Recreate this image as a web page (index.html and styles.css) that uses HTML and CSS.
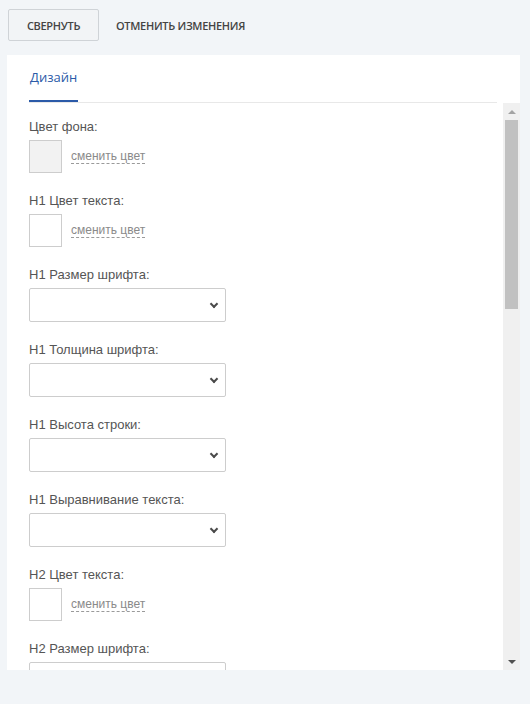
FILE: index.html
```html
<!DOCTYPE html>
<html lang="ru">
<head>
  <meta charset="UTF-8">
  <title>Дизайн</title>
  <link rel="stylesheet" href="styles.css">
</head>
<body>
  <div class="toolbar">
    <button class="btn btn-outline">Свернуть</button>
    <button class="btn btn-link">Отменить изменения</button>
  </div>

  <div class="panel">
    <div class="tabs">
      <div class="tab active">Дизайн</div>
    </div>

    <div class="panel-body">
      <div class="fields">
        <div class="field">
          <label>Цвет фона:</label>
          <div class="color-row">
            <span class="swatch swatch-gray"></span>
            <a class="change-color">сменить цвет</a>
          </div>
        </div>

        <div class="field">
          <label>H1 Цвет текста:</label>
          <div class="color-row">
            <span class="swatch"></span>
            <a class="change-color">сменить цвет</a>
          </div>
        </div>

        <div class="field">
          <label>H1 Размер шрифта:</label>
          <div class="select"><span class="chevron"></span></div>
        </div>

        <div class="field">
          <label>H1 Толщина шрифта:</label>
          <div class="select"><span class="chevron"></span></div>
        </div>

        <div class="field">
          <label>H1 Высота строки:</label>
          <div class="select"><span class="chevron"></span></div>
        </div>

        <div class="field">
          <label>H1 Выравнивание текста:</label>
          <div class="select"><span class="chevron"></span></div>
        </div>

        <div class="field">
          <label>H2 Цвет текста:</label>
          <div class="color-row">
            <span class="swatch"></span>
            <a class="change-color">сменить цвет</a>
          </div>
        </div>

        <div class="field">
          <label>H2 Размер шрифта:</label>
          <div class="select"><span class="chevron"></span></div>
        </div>
      </div>

      <!-- fake scrollbar, same look as the classic desktop one -->
      <div class="scrollbar">
        <span class="arrow arrow-up"></span>
        <div class="track">
          <div class="thumb"></div>
        </div>
        <span class="arrow arrow-down"></span>
      </div>
    </div>
  </div>
</body>
</html>
```

FILE: styles.css
```css
* {
  margin: 0;
  padding: 0;
  box-sizing: border-box;
}

body {
  width: 530px;
  height: 704px;
  background-color: #f2f5f8;
  font-family: 'Liberation Sans', Arial, sans-serif;
  color: #555;
  overflow: hidden;
}

.toolbar {
  display: flex;
  align-items: flex-start;
  padding: 9px 8px 0 8px;
  height: 55px;
}

.btn {
  font-family: 'Open Sans', sans-serif;
  font-size: 11px;
  font-weight: 600;
  letter-spacing: -0.3px;
  text-transform: uppercase;
  color: #444;
  background: none;
  border: none;
  cursor: pointer;
  height: 32px;
}

.btn-outline {
  width: 91px;
  border: 1px solid #cfd3d7;
  border-radius: 2px;
  background-color: #f2f4f6;
}

.btn-link {
  padding: 0 17px;
}

.panel {
  width: 513px;
  height: 615px;
  margin-left: 7px;
  background-color: #fff;
  display: flex;
  flex-direction: column;
}

.tabs {
  display: flex;
  margin: 0 23px 0 22px;
  border-bottom: 1px solid #e8e8e8;
  height: 48px;
}

.tab {
  font-family: 'Open Sans', sans-serif;
  font-size: 13px;
  font-weight: 500;
  color: #2b5aa8;
  padding: 13px 1px 0 1px;
  height: 47px;
}

.tab.active {
  border-bottom: 2px solid #2b5aa8;
}

.panel-body {
  flex: 1;
  display: flex;
  overflow: hidden;
}

.fields {
  flex: 1;
  padding: 16px 0 0 22px;
  overflow: hidden;
}

.field {
  margin-bottom: 20px;
}

.field label {
  display: block;
  font-size: 13px;
  line-height: 16px;
  color: #555;
  margin-bottom: 5px;
}

.color-row {
  display: flex;
  align-items: center;
  gap: 9px;
  height: 33px;
}

.swatch {
  width: 33px;
  height: 33px;
  border: 1px solid #cdcdcd;
  background-color: #fff;
}

.swatch-gray {
  background-color: #f2f2f2;
}

.change-color {
  font-size: 12px;
  color: #8a8a8a;
  border-bottom: 1px dashed #9a9a9a;
  line-height: 14px;
  cursor: pointer;
}

.select {
  width: 197px;
  height: 34px;
  border: 1px solid #cdcdcd;
  border-radius: 2px;
  display: flex;
  align-items: center;
  justify-content: flex-end;
  padding-right: 8px;
}

.chevron {
  width: 6px;
  height: 6px;
  border-right: 2px solid #4a4a4a;
  border-bottom: 2px solid #4a4a4a;
  transform: rotate(45deg);
  margin-top: -3px;
}

.scrollbar {
  width: 17px;
  background-color: #f0f0f0;
  display: flex;
  flex-direction: column;
}

.arrow {
  height: 17px;
  display: flex;
  align-items: center;
  justify-content: center;
}

.arrow::before {
  content: '';
  border-left: 4px solid transparent;
  border-right: 4px solid transparent;
}

.arrow-up::before {
  border-bottom: 4px solid #a3a3a3;
}

.arrow-down::before {
  border-top: 4px solid #505050;
}

.track {
  flex: 1;
  padding: 0 2px;
}

.thumb {
  height: 189px;
  background-color: #c1c1c1;
}
```
